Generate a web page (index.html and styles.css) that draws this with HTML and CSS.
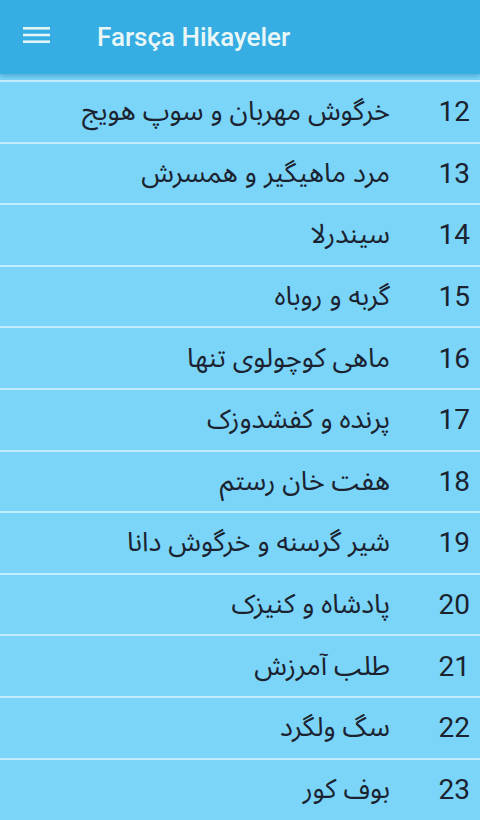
FILE: index.html
```html
<!DOCTYPE html>
<html lang="fa">
<head>
<meta charset="utf-8">
<title>Farsça Hikayeler</title>
<link rel="stylesheet" href="styles.css">
</head>
<body>
<header class="appbar">
  <svg class="menu" width="28" height="20" viewBox="0 0 28 20" aria-hidden="true">
    <rect x="0" y="1" width="27" height="2.6" fill="#e3f6f6"/>
    <rect x="0" y="7.7" width="27" height="2.6" fill="#e3f6f6"/>
    <rect x="0" y="14.4" width="27" height="2.6" fill="#e3f6f6"/>
  </svg>
  <h1 class="title">Farsça Hikayeler</h1>
</header>
<main class="list" dir="rtl">
  <div class="peek"></div>
  <div class="row"><span class="num">12</span><span class="name">خرگوش مهربان و سوپ هویج</span></div>
  <div class="row"><span class="num">13</span><span class="name">مرد ماهیگیر و همسرش</span></div>
  <div class="row"><span class="num">14</span><span class="name">سیندرلا</span></div>
  <div class="row"><span class="num">15</span><span class="name">گربه و روباه</span></div>
  <div class="row"><span class="num">16</span><span class="name">ماهی کوچولوی تنها</span></div>
  <div class="row"><span class="num">17</span><span class="name">پرنده و کفشدوزک</span></div>
  <div class="row"><span class="num">18</span><span class="name">هفت خان رستم</span></div>
  <div class="row"><span class="num">19</span><span class="name">شیر گرسنه و خرگوش دانا</span></div>
  <div class="row"><span class="num">20</span><span class="name">پادشاه و کنیزک</span></div>
  <div class="row"><span class="num">21</span><span class="name">طلب آمرزش</span></div>
  <div class="row"><span class="num">22</span><span class="name">سگ ولگرد</span></div>
  <div class="row"><span class="num">23</span><span class="name">بوف کور</span></div>
</main>
</body>
</html>
```
FILE: styles.css
```css
html, body {
  margin: 0;
  padding: 0;
}
body {
  width: 480px;
  height: 820px;
  overflow: hidden;
  background: #7ad5f8;
  font-family: Roboto, "Noto Sans", sans-serif;
}
.appbar {
  position: relative;
  z-index: 2;
  height: 74px;
  background: #36ade3;
  display: flex;
  align-items: center;
  box-shadow: 0 2px 5px rgba(30, 110, 160, 0.45);
}
.menu {
  margin-left: 23px;
  margin-top: -2px;
  flex: none;
}
.title {
  margin: 0 0 0 46px;
  font-size: 26px;
  font-weight: 500;
  color: #e9f7f6;
}
.list {
  background: #7ad5f8;
}
.peek {
  height: 6px;
}
.row {
  display: flex;
  align-items: center;
  height: 59.6px;
  border-top: 2px solid #c2eefb;
  color: #1b2230;
}
.num {
  width: 90px;
  box-sizing: border-box;
  padding-right: 10px;
  flex: none;
  font-family: Roboto, sans-serif;
  font-size: 28px;
  text-align: right;
  direction: ltr;
}
.name {
  font-family: "Noto Sans Arabic", "DejaVu Sans", sans-serif;
  font-size: 27px;
  white-space: nowrap;
}
```
